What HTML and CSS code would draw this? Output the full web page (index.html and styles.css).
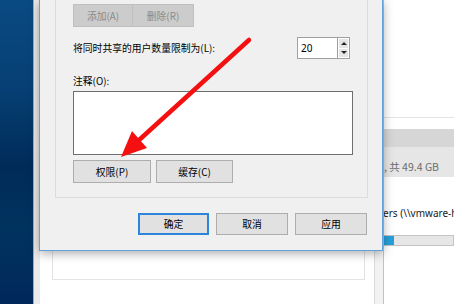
FILE: index.html
```html
<!DOCTYPE html>
<html lang="zh-CN">
<head>
    <meta charset="UTF-8">
    <meta name="viewport" content="width=device-width, initial-scale=1.0">
    <title>高级共享</title>
    <link rel="stylesheet" href="styles.css">
</head>
<body>
    <div class="desktop">
        <!-- 右側のエクスプローラー -->
        <div class="explorer">
            <div class="ex-top"></div>
            <div class="ex-head"></div>
            <div class="ex-group">, 共 49.4 GB</div>
            <div class="ex-item">ers (\\vmware-host) (Z:)</div>
            <div class="ex-bar"><div class="ex-bar-fill"></div></div>
        </div>

        <!-- 後ろのウィンドウ -->
        <div class="backwin">
            <div class="backwin-body">
                <div class="backwin-box"></div>
            </div>
            <div class="backwin-edge"></div>
        </div>

        <!-- 共享ダイアログ -->
        <div class="dialog">
            <div class="panel">
                <div class="row">
                    <button class="btn disabled">添加(A)</button>
                    <button class="btn disabled">删除(R)</button>
                </div>
                <div class="row limit">
                    <label for="limit">将同时共享的用户数量限制为(L):</label>
                    <div class="spin">
                        <input type="text" id="limit" value="20">
                        <div class="spin-btns">
                            <span class="up"></span>
                            <span class="down"></span>
                        </div>
                    </div>
                </div>
                <div class="note-label">注释(O):</div>
                <textarea class="note"></textarea>
                <div class="row perms">
                    <button class="btn">权限(P)</button>
                    <button class="btn">缓存(C)</button>
                </div>
            </div>
            <div class="footer">
                <button class="btn default">确定</button>
                <button class="btn">取消</button>
                <button class="btn">应用</button>
            </div>
        </div>

        <!-- 赤い矢印 -->
        <svg class="arrow" width="454" height="304" viewBox="0 0 454 304">
            <line x1="249" y1="40" x2="138" y2="141" stroke="#f41010" stroke-width="4.5" stroke-linecap="round"/>
            <polygon points="121,157 147,148 132,131" fill="#f41010"/>
        </svg>
    </div>
</body>
</html>
```

FILE: styles.css
```css
/* 全体 */
body {
    margin: 0;
    font-family: "Noto Sans CJK SC", "Noto Sans", sans-serif;
}
.desktop {
    position: relative;
    width: 454px;
    height: 304px;
    overflow: hidden;
    background: linear-gradient(180deg, #0a4a82 0%, #063f73 30%, #002b58 55%, #01335f 75%, #00285a 100%);
}

/* 右側のエクスプローラー */
.explorer {
    position: absolute;
    left: 383px;
    top: 0;
    right: 0;
    bottom: 0;
    background-color: #ffffff;
    overflow: hidden;
    white-space: nowrap;
}
.ex-top {
    height: 117px;
    border-bottom: 1px solid #e3e3e3;
    margin-bottom: 11px;
}
.ex-head {
    height: 18px;
    background-color: #d6d6d6;
}
.ex-group {
    height: 30px;
    box-sizing: border-box;
    padding: 13px 0 0 1px;
    line-height: 13px;
    font-size: 10.5px;
    color: #6d6d6d;
    background-color: #e6e6e6;
}
.ex-item {
    height: 58px;
    box-sizing: border-box;
    padding-top: 29px;
    line-height: 14px;
    font-family: "Noto Sans", sans-serif;
    font-size: 10px;
    color: #1a1a1a;
}
.ex-bar {
    height: 11px;
    box-sizing: border-box;
    border: 1px solid #c4c4c4;
    border-left: none;
    background-color: #e6e6e6;
}
.ex-bar-fill {
    width: 11px;
    height: 100%;
    background-color: #26a0da;
}

/* 後ろのウィンドウ */
.backwin {
    position: absolute;
    left: 33px;
    top: 0;
    width: 351px;
    height: 304px;
    display: flex;
    background-color: #ebebeb;
    border-left: 1px solid #a9a9a9;
    box-sizing: border-box;
    padding-left: 6px;
}
.backwin-body {
    width: 334px;
    background-color: #ffffff;
}
.backwin-box {
    width: 313px;
    height: 280px;
    margin-left: 12px;
    box-sizing: border-box;
    border: 1px solid #e3e3e3;
    border-top: none;
}
.backwin-edge {
    flex: 1;
    background-color: #f2f2f2;
    border-left: 1px solid #dadada;
    border-right: 1px solid #c2c2c2;
}

/* ダイアログ */
.dialog {
    position: absolute;
    left: 39px;
    top: 0;
    width: 344px;
    box-sizing: border-box;
    background-color: #f0f0f0;
    border: 1px solid #62a2dc;
    border-top: none;
    box-shadow: 0 2px 10px rgba(0, 0, 0, 0.35);
    font-size: 9.8px;
    color: #000000;
}
.panel {
    width: 313px;
    margin-left: 15px;
    box-sizing: border-box;
    border: 1px solid #dcdcdc;
    border-top: none;
    padding: 4px 17px 14px 17px;
}
.row {
    display: flex;
    align-items: center;
}
.btn {
    height: 23px;
    box-sizing: border-box;
    padding: 0;
    font-family: inherit;
    font-size: 9.8px;
    color: #000000;
    background-color: #e1e1e1;
    border: 1px solid #adadad;
}
.btn.disabled {
    width: 60px;
    color: #8a8a8a;
    background-color: #cccccc;
    border-color: #bfbfbf;
}
.btn.disabled + .btn.disabled {
    width: 61px;
    border-left: none;
}
.limit {
    margin-top: 10px;
    height: 22px;
    justify-content: space-between;
}

/* 数値入力 */
.spin {
    display: flex;
    width: 53px;
    height: 22px;
}
.spin input {
    width: 40px;
    height: 22px;
    box-sizing: border-box;
    margin: 0;
    padding: 0 0 0 3px;
    border: 1px solid #a0a0a0;
    border-right: none;
    font-family: "Noto Sans", sans-serif;
    font-size: 10px;
    color: #000000;
    background-color: #ffffff;
}
.spin-btns {
    display: flex;
    flex-direction: column;
    width: 13px;
    box-sizing: border-box;
    border: 1px solid #a0a0a0;
    background-color: #ffffff;
}
.spin-btns span {
    flex: 1;
    margin: 1px 1px 0 1px;
    background-color: #e5e5e5;
    display: flex;
    align-items: center;
    justify-content: center;
}
.spin-btns span.down {
    margin-bottom: 1px;
}
.spin-btns .up::before {
    content: "";
    border-left: 3px solid transparent;
    border-right: 3px solid transparent;
    border-bottom: 3px solid #222222;
}
.spin-btns .down::before {
    content: "";
    border-left: 3px solid transparent;
    border-right: 3px solid transparent;
    border-top: 3px solid #222222;
}

/* 注釈 */
.note-label {
    margin-top: 14px;
    line-height: 16px;
}
.note {
    display: block;
    width: 280px;
    height: 64px;
    box-sizing: border-box;
    margin: 2px 0 0 0;
    border: 1px solid #6e6e6e;
    background-color: #ffffff;
    resize: none;
}
.perms {
    margin-top: 5px;
    gap: 5px;
}
.perms .btn {
    width: 78px;
}
.perms .btn + .btn {
    width: 77px;
}

/* 下のボタン */
.footer {
    display: flex;
    justify-content: flex-end;
    gap: 7px;
    padding: 15px 15px 15px 0;
}
.footer .btn {
    width: 72px;
    height: 22px;
}
.footer .btn.default {
    width: 71px;
    border: 2px solid #2c84db;
}

/* 矢印 */
.arrow {
    position: absolute;
    left: 0;
    top: 0;
    pointer-events: none;
}
```
